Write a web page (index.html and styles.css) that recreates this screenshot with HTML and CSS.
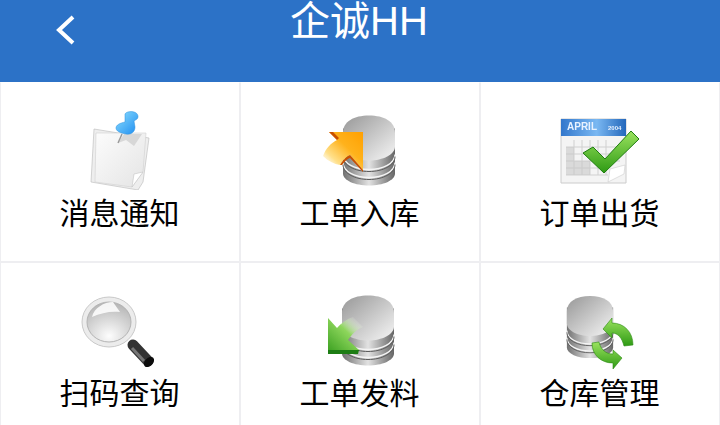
FILE: index.html
```html
<!DOCTYPE html>
<html lang="zh-CN">
<head>
    <meta charset="UTF-8">
    <meta name="viewport" content="width=device-width, initial-scale=1.0">
    <title>企诚HH</title>
    <link rel="stylesheet" href="styles.css">
</head>
<body>
    <svg class="defs" aria-hidden="true">
        <defs>
            <linearGradient id="drumSide" x1="0" x2="1" y1="0" y2="0">
                <stop offset="0" stop-color="#707070"/>
                <stop offset=".5" stop-color="#e2e2e2"/>
                <stop offset="1" stop-color="#666"/>
            </linearGradient>
            <linearGradient id="drumTop" x1="0" x2="1" y1="0" y2="1">
                <stop offset="0" stop-color="#979797"/>
                <stop offset=".55" stop-color="#cbcbcb"/>
                <stop offset="1" stop-color="#f6f6f6"/>
            </linearGradient>
            <linearGradient id="orange" x1="0" x2="1" y1="1" y2="0">
                <stop offset="0" stop-color="#fff" stop-opacity="0"/>
                <stop offset=".28" stop-color="#ffe08a"/>
                <stop offset=".6" stop-color="#ffb21c"/>
                <stop offset="1" stop-color="#ffa000"/>
            </linearGradient>
            <linearGradient id="greenDown" x1="1" x2="0" y1="0" y2="1">
                <stop offset=".1" stop-color="#fff" stop-opacity="0"/>
                <stop offset=".45" stop-color="#8ed65c"/>
                <stop offset="1" stop-color="#3fa324"/>
            </linearGradient>
            <linearGradient id="green" x1="0" x2="0" y1="0" y2="1">
                <stop offset="0" stop-color="#9be35f"/>
                <stop offset="1" stop-color="#2e9a14"/>
            </linearGradient>
            <linearGradient id="blueBar" x1="0" x2="1" y1="0" y2="0">
                <stop offset="0" stop-color="#3277cc"/>
                <stop offset=".55" stop-color="#7ab8f2"/>
                <stop offset="1" stop-color="#2468bc"/>
            </linearGradient>
            <linearGradient id="paper" x1="0" x2="1" y1="0" y2="1">
                <stop offset="0" stop-color="#fcfcfc"/>
                <stop offset="1" stop-color="#e4e4e4"/>
            </linearGradient>
            <linearGradient id="pin" x1="0" x2="1" y1="0" y2="1">
                <stop offset="0" stop-color="#8fe0ff"/>
                <stop offset="1" stop-color="#1c8cf0"/>
            </linearGradient>
            <radialGradient id="lens" cx=".5" cy=".85" r=".9">
                <stop offset="0" stop-color="#fdfdfd"/>
                <stop offset="1" stop-color="#b0b0b0"/>
            </radialGradient>
            <symbol id="drum" viewBox="0 0 54 72">
                <path d="M1 14v45c0 7 12 12 26 12s26-5 26-12V14z" fill="url(#drumSide)"/>
                <path d="M1 40c0 9 12 15 26 15s26-6 26-15M1 48c0 9 12 15 26 15s26-6 26-15" fill="none" stroke="#f4f4f4" stroke-width="1.4"/>
                <path d="M1 42c0 9 12 15 26 15s26-6 26-15M1 50c0 9 12 15 26 15s26-6 26-15" fill="none" stroke="#5c5c5c" stroke-width="1"/>
                <path d="M1 18C1 7 12 1 27 1s26 6 26 17v14c0 8-12 14-26 14S1 40 1 32z" fill="url(#drumTop)"/>
            </symbol>
        </defs>
    </svg>

    <header class="top-bar">
        <svg class="back-icon" viewBox="0 0 22 32"><path d="M19 3 5 16l14 13" fill="none" stroke="#fff" stroke-width="4"/></svg>
        <h1 class="page-title">企诚HH</h1>
    </header>

    <main class="menu-grid">
        <a class="menu-item">
            <svg class="menu-icon" viewBox="0 0 80 80">
                <path d="M14 19 69 28 63 72 58 80 11 72z" fill="#eee" stroke="#b8b8b8" stroke-width=".6"/>
                <path d="M16 23H66L63 62 52 77 15 72z" fill="url(#paper)" stroke="#d0d0d0" stroke-width=".6"/>
                <path d="M52 77 54 64 63 62z" fill="#fff" stroke="#c4c4c4" stroke-width=".6"/>
                <path d="M38 33 44 24 62 24 54 36 46 30z" fill="#ccc" opacity=".7"/>
                <path d="M38 33 42 24" stroke="#999" stroke-width="1.4"/>
                <path d="M45 4C46 2 50 1 54 2 58 3 59 7 57 9L54 11 55 17C55 22 51 25 46 24 40 23 36 21 36 18 36 15 40 13 45 12z" fill="url(#pin)" stroke="#2b8fdd" stroke-width=".5"/>
            </svg>
            <span class="menu-label">消息通知</span>
        </a>
        <a class="menu-item">
            <svg class="menu-icon" viewBox="0 0 80 80">
                <use href="#drum" x="22" y="4" width="54" height="73"/>
                <path d="M9 22H43V60L30 45C26 47 22 51 20 55 14 54 8 51 3 46 6 38 11 33 17 30z" fill="url(#orange)"/>
                <path d="M9 22 17 30 19 28 13 22zM43 60 30 45C26 47 22 51 20 55L22 55C24 52 27 49 30 48L43 62z" fill="#c94f00"/>
            </svg>
            <span class="menu-label">工单入库</span>
        </a>
        <a class="menu-item">
            <svg class="menu-icon" viewBox="0 0 80 80">
                <path d="M1 9H66V73H1z" fill="#f4f4f4" stroke="#ccc"/>
                <path d="M1 9H66V26H1z" fill="url(#blueBar)"/>
                <text class="cal-month" x="7" y="20">APRIL</text>
                <text class="cal-year" x="48" y="20">2004</text>
                <path d="M6 37H60M6 44H60M6 51H60M6 58H48M6 65H48M14 30V65M22 30V65M30 30V65M38 30V65M46 30V65" fill="none" stroke="#d0d0d0"/>
                <path d="M6 37H14V65H6zM6 51H30V65H6z" fill="#c8c8c8" opacity=".6"/>
                <path d="M48 72 50 59 65 55 64 64z" fill="#fff" stroke="#ccc" stroke-width=".6"/>
                <path d="M23 43 33 37 45 49 71 21 79 29 44 63z" fill="url(#green)" stroke="#1f7d10"/>
            </svg>
            <span class="menu-label">订单出货</span>
        </a>
        <a class="menu-item">
            <svg class="menu-icon" viewBox="0 0 80 80">
                <path d="M53 55 68 71" stroke="#333" stroke-width="11" stroke-linecap="round"/>
                <path d="M52 58 64 71" stroke="#777" stroke-width="3"/>
                <ellipse cx="69" cy="72" rx="4" ry="6" transform="rotate(45 69 72)" fill="#0c0c0c"/>
                <ellipse cx="29" cy="32" rx="27" ry="25" fill="#ececec" stroke="#c8c8c8"/>
                <ellipse cx="29" cy="32" rx="22" ry="20" fill="url(#lens)" stroke="#b4b4b4"/>
                <path d="M12 27C14 18 24 12 33 12L40 22C30 21 21 23 12 27z" fill="#fff" opacity=".85"/>
            </svg>
            <span class="menu-label">扫码查询</span>
        </a>
        <a class="menu-item">
            <svg class="menu-icon" viewBox="0 0 80 80">
                <use href="#drum" x="21" y="4" width="54" height="73"/>
                <path d="M8 28 17 38C21 33 27 29 33 27L43 37C37 39 32 44 28 50L39 60H8z" fill="url(#greenDown)"/>
                <path d="M8 60H39L38 64H8z" fill="#1d7d14"/>
            </svg>
            <span class="menu-label">工单发料</span>
        </a>
        <a class="menu-item">
            <svg class="menu-icon" viewBox="0 0 80 80">
                <use href="#drum" x="6" y="4" width="48" height="66"/>
                <path d="M43 39 52 28V33C64 33 73 42 73 55L64 56C62 48 58 43 52 43V48z" fill="url(#green)" stroke="#2c8a14" stroke-width=".6"/>
                <path d="M62 68 53 79V73C41 73 32 65 32 53L39 52C41 60 46 64 53 64V60z" fill="url(#green)" stroke="#2c8a14" stroke-width=".6"/>
            </svg>
            <span class="menu-label">仓库管理</span>
        </a>
    </main>
</body>
</html>
```

FILE: styles.css
```css
html, body {
    margin: 0;
    height: 100%;
    overflow: hidden;
}
body {
    background-color: #fff;
    font-family: "Liberation Sans", "Noto Sans CJK SC", sans-serif;
    color: #000;
}
.defs {
    display: block;
    width: 0;
    height: 0;
}
.top-bar {
    display: flex;
    justify-content: center;
    height: 82px;
    padding-right: 2px;
    box-sizing: border-box;
    background-color: #2c72c7;
    position: relative;
}
.back-icon {
    position: absolute;
    left: 54px;
    top: 14px;
    width: 22px;
    height: 32px;
}
.page-title {
    margin: 0;
    font-size: 40px;
    font-weight: normal;
    line-height: 42px;
    color: #fff;
}
.menu-grid {
    display: grid;
    grid-template-columns: repeat(3, 240px);
    grid-auto-rows: 180px;
}
.menu-item {
    display: flex;
    flex-direction: column;
    align-items: center;
    box-sizing: border-box;
    padding-top: 27px;
    border: 1px solid #eeeef1;
}
.menu-item:nth-child(-n+3) {
    border-top-color: #fff;
}
.menu-icon {
    width: 80px;
    height: 80px;
    filter: blur(.4px);
}
.menu-label {
    font-size: 30px;
    line-height: 36px;
    margin-top: 6px;
    margin-right: 1px;
}
.cal-month {
    font: bold 10px "Liberation Sans", sans-serif;
    fill: #e8f2ff;
}
.cal-year {
    font: bold 6px "Liberation Sans", sans-serif;
    fill: #e8f2ff;
}
```
